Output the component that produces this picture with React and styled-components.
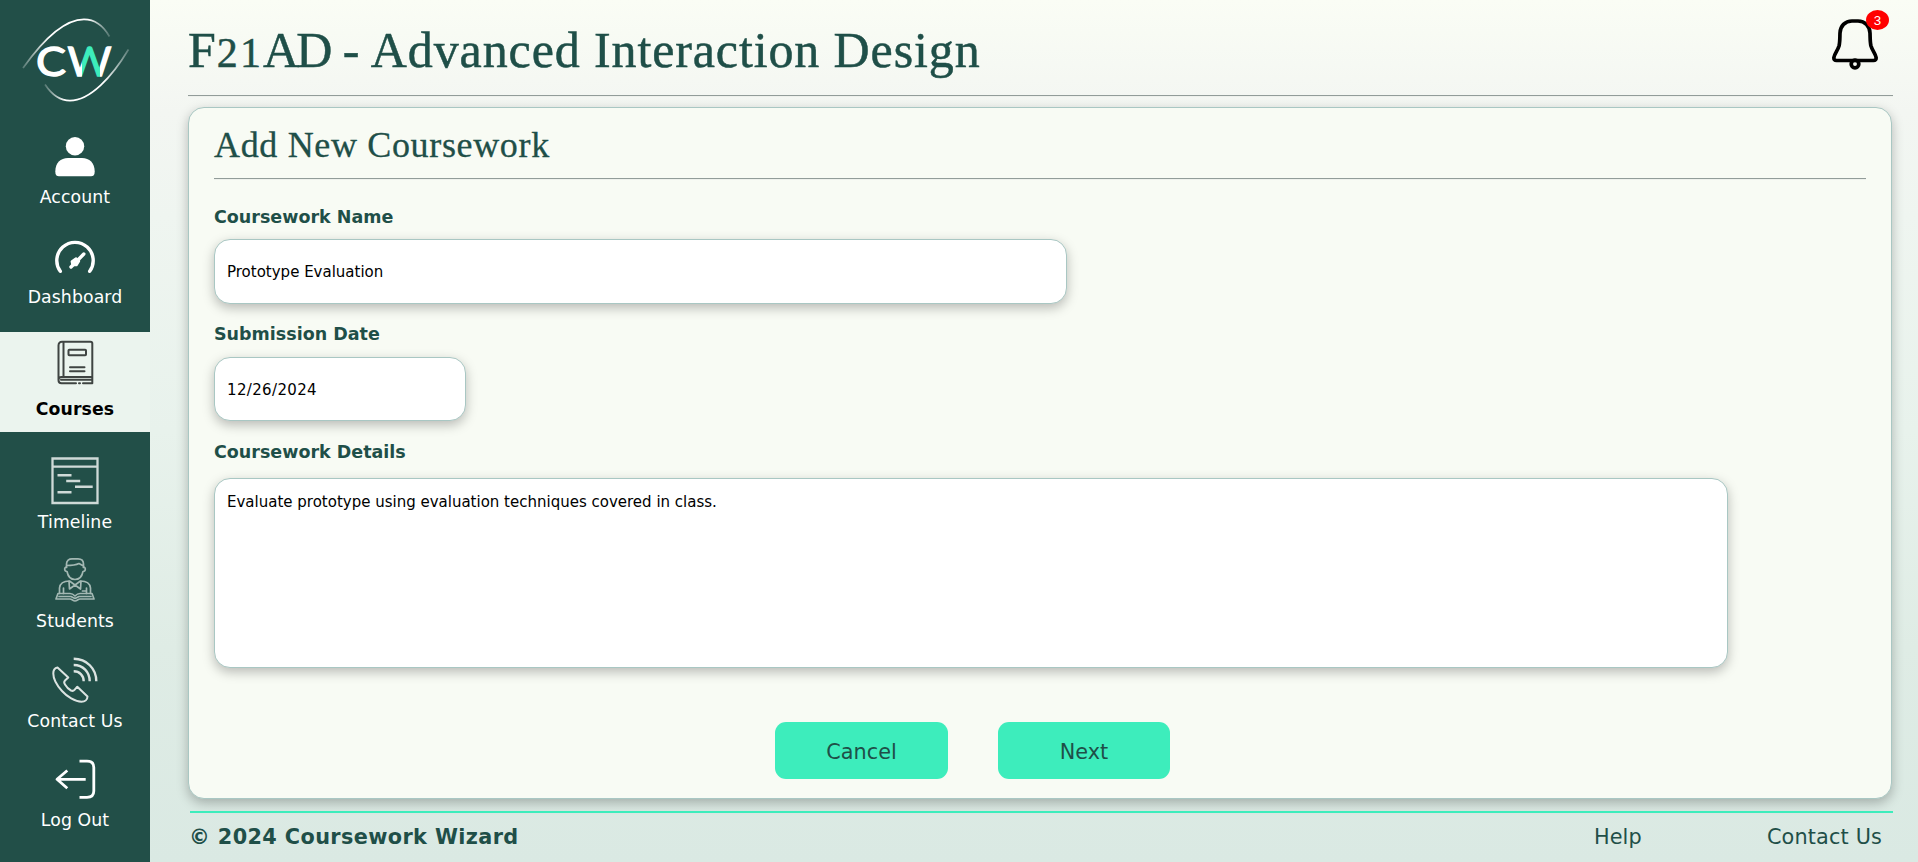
import React from 'react';
import styled, { createGlobalStyle, css } from 'styled-components';

const Global = createGlobalStyle`
  * { box-sizing: border-box; }
  html, body, #root { height: 100%; margin: 0; }
  body { overflow: hidden; font-family: Verdana, "DejaVu Sans", sans-serif; color: #1f4f48; }
  input, textarea, button { font: inherit; margin: 0; }
`;

const Page = styled.div`
  display: flex;
  height: 862px;
  background: linear-gradient(180deg, #fafdf5 0%, #f3f6f2 13%, #eff5f0 25%, #e8f2ec 50%, #dfece5 75%, #dae9e3 100%);
`;

const Sidebar = styled.nav`
  width: 150px;
  flex: none;
  background: #224f48;
`;

const Logo = styled.svg`
  display: block;
  width: 150px;
  height: 120.4px;
`;

const NavItem = styled.a`
  display: flex;
  flex-direction: column;
  align-items: center;
  height: 99.4px;
  padding-top: 12px;
  font-size: 17.3px;
  line-height: 24px;
  letter-spacing: 0.1px;
  color: #fff;
  svg { display: block; width: 48px; height: 48px; margin-bottom: 5px; overflow: visible; flex: none; }
  ${(p) => p.$active && css`
    height: 100px;
    margin: 12.8px 0 13px;
    background: #ebf4ee;
    color: #000;
    font-weight: bold;
  `}
`;

const Main = styled.main`
  flex: 1;
  display: flex;
  flex-direction: column;
  padding: 0 25px 0 38px;
`;

const Header = styled.header`
  display: flex;
  justify-content: space-between;
  height: 95px;
`;

const Title = styled.h1`
  margin: 0;
  padding-top: 15px;
  font: 400 50px/70px Georgia, "Liberation Serif", serif;
  letter-spacing: 0.88px;
  white-space: nowrap;
  -webkit-text-stroke: 0.5px #1f4f48;
`;

const OldStyle = styled.span`
  font-size: 0.84em;
  letter-spacing: 2.2px;
`;

const Tight = styled.span`
  letter-spacing: -3px;
`;

const Bell = styled.div`
  position: relative;
  width: 46px;
  height: 51px;
  margin: 19px 15px 0 0;
  svg { display: block; }
`;

const Badge = styled.span`
  position: absolute;
  top: -9px;
  right: -11px;
  width: 23px;
  height: 20px;
  border-radius: 50%;
  background: #f00;
  color: #fff;
  font: 13.3px/21px "Liberation Sans", Arial, sans-serif;
  text-align: center;
`;

const Rule = styled.hr`
  margin: 0;
  border: 0;
  height: 2px;
  border-top: 1px solid #929c99;
  border-bottom: 1px solid #eef1ec;
`;

const Card = styled.section`
  width: 1704px;
  height: 692px;
  margin-top: 10px;
  padding: 0 25px;
  border: 1px solid #a9c7c3;
  border-radius: 16px;
  background: #f8fbf4;
  box-shadow: 0 4px 12px rgba(0, 0, 0, 0.26);
`;

const CardTitle = styled.h2`
  margin: 0;
  height: 70px;
  padding-top: 12px;
  font: 400 36px/50px Georgia, "Liberation Serif", serif;
  letter-spacing: 0.66px;
  -webkit-text-stroke: 0.3px #1f4f48;
`;

const Label = styled.label`
  display: block;
  height: ${(p) => p.$h}px;
  padding-top: ${(p) => p.$top}px;
  font-size: 17.5px;
  line-height: 24px;
  font-weight: bold;
`;

const box = css`
  display: block;
  width: ${(p) => p.$w}px;
  border: 1px solid #a9c7c3;
  border-radius: 16px;
  background: #fff;
  box-shadow: 0 4px 12px rgba(0, 0, 0, 0.26);
  color: #000;
  outline: none;
`;

const Field = styled.input`
  ${box}
  && { font-size: 15px; }
  height: ${(p) => p.$h || 65}px;
  padding: ${(p) => (p.$h ? 2 : 0)}px 12px 0;
  letter-spacing: ${(p) => p.$spacing || 0}px;
`;

const Area = styled.textarea`
  ${box}
  && { font-size: 15px; line-height: 20px; }
  height: 190px;
  padding: 13px 12px;
  resize: none;
`;

const Actions = styled.div`
  display: flex;
  gap: 50px;
  margin: 54px 0 0 561px;
`;

const Button = styled.button`
  width: ${(p) => p.$w}px;
  height: 57px;
  padding: 2px 0 0;
  border: 0;
  border-radius: 11px;
  background: #3dedbc;
  color: #1f4f48;
  && { font-size: 20.8px; }
`;

const Footer = styled.footer`
  display: flex;
  align-items: flex-start;
  width: 1703px;
  margin: 12px 0 0 2px;
  padding-top: 10px;
  border-top: 2px solid #3dedbc;
  font-size: 20.8px;
  line-height: 28px;
  white-space: nowrap;
`;

const Copyright = styled.strong`
  flex: 1;
  margin-left: -1px;
  letter-spacing: 0.38px;
`;

const FooterLink = styled.a`
  margin-right: ${(p) => p.$gap}px;
  letter-spacing: 0.15px;
`;

const LogoArt = () => (
  <Logo viewBox="0 0 150 120.400">
    <defs>
      <linearGradient id="up" gradientUnits="userSpaceOnUse" x1="23" y1="0" x2="110" y2="0">
        <stop offset="0" stopColor="#fff" stopOpacity=".25" />
        <stop offset=".3" stopColor="#fff" />
        <stop offset=".75" stopColor="#fff" />
        <stop offset="1" stopColor="#fff" stopOpacity=".2" />
      </linearGradient>
      <linearGradient id="down" gradientUnits="userSpaceOnUse" x1="44" y1="0" x2="129" y2="0">
        <stop offset="0" stopColor="#fff" stopOpacity=".2" />
        <stop offset=".25" stopColor="#fff" />
        <stop offset=".7" stopColor="#fff" />
        <stop offset="1" stopColor="#fff" stopOpacity=".25" />
      </linearGradient>
      <linearGradient id="w" gradientUnits="userSpaceOnUse" x1="0" y1="0" x2="150" y2="0">
        <stop offset=".546" stopColor="#fff" />
        <stop offset=".546" stopColor="#3dedbc" />
        <stop offset=".669" stopColor="#3dedbc" />
        <stop offset=".669" stopColor="#fff" />
      </linearGradient>
    </defs>
    <path d="M23 68C45 37 66 19.300 84 19.300C95 19.300 103 25 109.500 36.500" fill="none" stroke="url(#up)" strokeWidth="1.700" />
    <path d="M45 84.500C52 95 60 100.700 70 100.700C90 100.700 112 77 128.500 49.500" fill="none" stroke="url(#down)" strokeWidth="1.700" />
    <g fontFamily="Lato, sans-serif" fontWeight="400" fontSize="41" strokeWidth="1.300">
      <text x="36" y="76" fill="#fff" stroke="#fff" textLength="30" lengthAdjust="spacingAndGlyphs">C</text>
      <text x="67.500" y="76" fill="url(#w)" stroke="url(#w)" textLength="44" lengthAdjust="spacingAndGlyphs">W</text>
    </g>
  </Logo>
);

const Icon = ({ children, w = 2, c = '#fff' }) => (
  <svg viewBox="0 0 48 48" fill="none" stroke={c} strokeWidth={w} strokeLinecap="round" strokeLinejoin="round">{children}</svg>
);

const AccountIcon = () => (
  <Icon w={0}>
    <circle cx="24" cy="14.300" r="9.200" fill="#fff" />
    <path fill="#fff" d="M4.300 39.500C4.300 31 9.500 26.100 17 26.100H31C38.500 26.100 43.700 31 43.700 39.500C43.700 43 42.500 44.300 40 44.300H8C5.500 44.300 4.300 43 4.300 39.500Z" />
  </Icon>
);

const DashboardIcon = () => (
  <Icon w={3.4}>
    <path d="M9.300 39.300A18.200 18.200 0 1 1 38.700 39.300" />
    <path d="M20 35L32.800 22" strokeWidth="3.400" />
    <path d="M20.800 29.500L25 26.500L28 29L25.500 33L21.500 33Z" fill="#fff" strokeWidth="2.400" />
  </Icon>
);

const BookIcon = () => (
  <Icon c="#3f4442" w={2}>
    <path d="M25 39.300H10.500C8.500 39.300 7.500 38 7.500 36V1.500C7.500-1 9-2.300 11-2.300H39.500C40.700-2.300 41.300-1.500 41.300-.500V33H10.500C8.500 33 7.500 34 7.500 36M41.300 33V39.300H32M12.500-2V32.500M10 35.800H40M28 39.300H29" />
    <rect x="17.500" y="5.700" width="17.500" height="5.600" rx=".8" />
    <path d="M19 23.300H33.500M19 27.300H33.500" />
  </Icon>
);

const TimelineIcon = () => (
  <Icon c="#cfdad7" w={2.3}>
    <path strokeLinejoin="miter" d="M1.500 1.500H46.500V46H1.500ZM1.500 9.700H46.500" />
    <path strokeLinecap="butt" strokeWidth="2.600" d="M6.500 18.300H20.500M15.200 24H29.200M24 29.700H41.700M6.500 35.300H20.500" />
  </Icon>
);

const StudentIcon = () => (
  <Icon c="#a3b8b3" w={1.7}>
    <path d="M15.500 11.500V8C15.500 4.500 18 2.800 21 2.800H27C30.500 2.800 32.500 5 32.500 8V11.500M15.500 9.500C21 9.500 25 9 28 7.500L32.500 10" />
    <path d="M15.500 11C13 11 13 15.500 16 15.500C17 20.500 20 23.500 24 23.500S31 20.500 32 15.500C35 15.500 35 11 32.500 11" />
    <path d="M8.500 37.500V32C9 27.500 13 25 18.500 25L24 29L29.500 25C35 25 39 27.500 39.500 32V37.500M18 25L18.500 33L24 29L29.500 33L30 25M12.500 32V37.500M35.500 32V37.500M31.500 35H35" />
    <path d="M7 37.500L5 43H19C21 43 22 45 24 45S27 43 29 43H43L41 37.500H29C27 37.500 25.500 38.500 24 40C22.500 38.500 21 37.500 19 37.500ZM8 40.500H20L24 42.500L28 40.500H40" />
  </Icon>
);

const PhoneIcon = () => (
  <Icon c="#dbe3e1" w={2}>
    <path d="M6.500 11.500L17.300 21.500L14 24.500C13 25.500 13 27 14 28.500C15.500 31 18 33.500 20 34.500C21.500 35.200 22.500 35 23.500 33.800L26.300 30.700L36.500 40.500C36.500 43.500 34 45.700 30.500 45.700C24 45.700 16 40.500 11 35C6 29.500 2.300 22.500 2.300 17.500C2.300 14.500 4 12 6.500 11.500Z" />
    <path strokeWidth="2.400" strokeLinecap="butt" d="M22.700 15.300C28.500 15.300 32.700 19.500 32.700 25.300M22.700 9C32 9 38.700 16 38.700 25.300M22.700 2.800C35.500 2.800 45.300 12.500 45.300 25.300" />
  </Icon>
);

const LogoutIcon = () => (
  <Icon w={2.8}>
    <path strokeLinecap="butt" d="M28.500 6.200H36C40.500 6.200 42.800 8.500 42.800 12.500V36C42.800 40 40.500 42.300 36 42.300H28.500" />
    <path strokeLinecap="butt" d="M34.700 24.300H6M16.300 15.500L6 24.300L16.300 33.300" />
  </Icon>
);

const BellArt = () => (
  <svg width="46" height="51" viewBox="0 0 46 51" fill="none" stroke="#000" strokeWidth="3.700" strokeLinejoin="round">
    <path d="M20 2H26C33 2 37.700 7 38 14C38.200 19 38 23 39 27C40.300 31.500 43.500 34.500 44.100 38.500C44.300 40.500 43.300 41.500 41.500 41.500H4.500C2.700 41.500 1.700 40.500 1.900 38.500C2.500 34.500 5.700 31.500 7 27C8 23 7.800 19 8 14C8.300 7 13 2 20 2Z" />
    <circle cx="23" cy="45" r="3.800" />
  </svg>
);

const items = [
  ['Account', AccountIcon],
  ['Dashboard', DashboardIcon],
  ['Courses', BookIcon],
  ['Timeline', TimelineIcon],
  ['Students', StudentIcon],
  ['Contact Us', PhoneIcon],
  ['Log Out', LogoutIcon],
];

export default function App() {
  return (
    <>
      <Global />
      <Page>
        <Sidebar>
          <LogoArt />
          {items.map(([name, Art]) => (
            <NavItem key={name} $active={name === 'Courses'}>
              <Art />
              <span>{name}</span>
            </NavItem>
          ))}
        </Sidebar>
        <Main>
          <Header>
            <Title>F<OldStyle>21</OldStyle><Tight>AD</Tight> - Advanced Interaction Design</Title>
            <Bell>
              <BellArt />
              <Badge>3</Badge>
            </Bell>
          </Header>
          <Rule />
          <Card>
            <CardTitle>Add New Coursework</CardTitle>
            <Rule />
            <Label $h={59} $top={25}>Coursework Name</Label>
            <Field $w={853} defaultValue="Prototype Evaluation" />
            <Label $h={53} $top={18}>Submission Date</Label>
            <Field $w={252} $h={64} $spacing={0.35} defaultValue="12/26/2024" />
            <Label $h={57} $top={19}>Coursework Details</Label>
            <Area $w={1514} defaultValue="Evaluate prototype using evaluation techniques covered in class." />
            <Actions>
              <Button $w={173}>Cancel</Button>
              <Button $w={172}>Next</Button>
            </Actions>
          </Card>
          <Footer>
            <Copyright>© 2024 Coursework Wizard</Copyright>
            <FooterLink $gap={125}>Help</FooterLink>
            <FooterLink $gap={11}>Contact Us</FooterLink>
          </Footer>
        </Main>
      </Page>
    </>
  );
}
